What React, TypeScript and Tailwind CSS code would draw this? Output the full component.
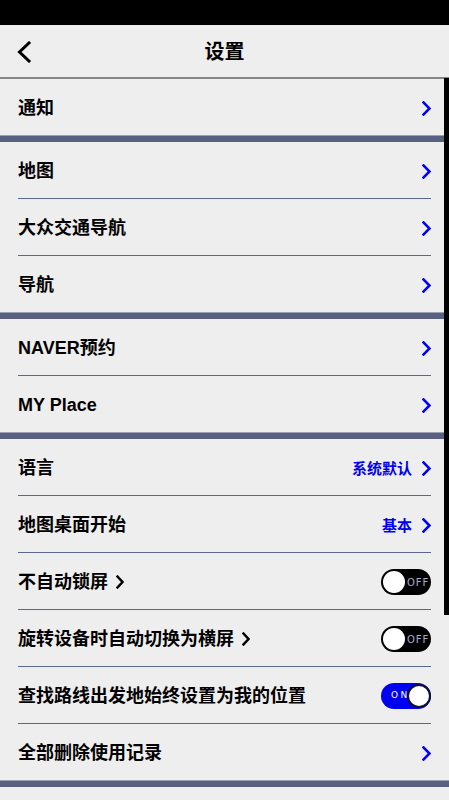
import React from "react";

const font = { fontFamily: '"Liberation Sans", "Noto Sans CJK SC", sans-serif' };

function Chevron({ color = "#0000ff", w = 9, h = 15, sw = 2.6 }: { color?: string; w?: number; h?: number; sw?: number }) {
  return (
    <svg width={w} height={h} viewBox={`0 0 ${w} ${h}`} fill="none">
      <polyline points={`1.5,1.5 ${w - 1.5},${h / 2} 1.5,${h - 1.5}`} stroke={color} strokeWidth={sw} strokeLinecap="square" strokeLinejoin="miter" />
    </svg>
  );
}

function Toggle({ on }: { on: boolean }) {
  if (on) {
    return (
      <div className="relative w-[50px] h-[26px] rounded-full bg-[#0000f0] flex items-center">
        <span className="absolute left-[10px] text-[9px] tracking-[2.5px] text-white" style={{ fontFamily: '"DejaVu Sans", sans-serif' }}>ON</span>
        <div className="absolute right-[0px] top-[1px] w-[24px] h-[24px] rounded-full bg-white border-[2px] border-[#101030]" />
      </div>
    );
  }
  return (
    <div className="relative w-[50px] h-[26px] rounded-full bg-black flex items-center">
      <div className="absolute left-[2px] top-[2px] w-[22px] h-[22px] rounded-full bg-white" />
      <span className="absolute left-[26px] text-[10px] tracking-[1px] text-[#a8aed0]" style={{ fontFamily: '"DejaVu Sans", sans-serif' }}>OFF</span>
    </div>
  );
}

function Row({ label, right, inlineChevron }: { label: string; right?: React.ReactNode; inlineChevron?: boolean }) {
  return (
    <div className="h-[56px] flex items-center justify-between pl-[18px] pr-[18px]">
      <div className="flex items-center gap-[8px] translate-y-[1px]">
        <span className="text-[18px] font-bold text-black leading-none">{label}</span>
        {inlineChevron && <Chevron color="#000" w={8} h={14} sw={2.4} />}
      </div>
      <div className="translate-y-[1px]">{right ?? <Chevron />}</div>
    </div>
  );
}

function Divider() {
  return <div className="mx-[18px] h-px bg-[#5a6890]" />;
}

function Sep() {
  return <div className="h-[7px] bg-[#595f80] border-t border-[#9ba0b4]" />;
}

function RightLabel({ text }: { text: string }) {
  return (
    <div className="flex items-center gap-[10px]">
      <span className="text-[15px] font-bold text-[#0000f0] leading-none">{text}</span>
      <Chevron />
    </div>
  );
}

export default function App() {
  return (
    <div className="relative w-[449px] h-[800px] bg-[#eeeeee] overflow-hidden" style={font}>
      <div className="h-[25px] bg-black" />
      <div className="relative h-[54px] flex items-center justify-center border-b-2 border-[#858585]">
        <div className="absolute left-[16px] top-[16px]">
          <svg width="16" height="22" viewBox="0 0 16 22" fill="none">
            <polyline points="13,2 3.5,11 13,20" stroke="#000" strokeWidth="3" strokeLinecap="square" />
          </svg>
        </div>
        <span className="text-[20px] font-bold text-black translate-y-[1px]">设置</span>
      </div>
      <Row label="通知" />
      <Sep />
      <Row label="地图" />
      <Divider />
      <Row label="大众交通导航" />
      <Divider />
      <Row label="导航" />
      <Sep />
      <Row label="NAVER预约" />
      <Divider />
      <Row label="MY Place" />
      <Sep />
      <Row label="语言" right={<RightLabel text="系统默认" />} />
      <Divider />
      <Row label="地图桌面开始" right={<RightLabel text="基本" />} />
      <Divider />
      <Row label="不自动锁屏" inlineChevron right={<Toggle on={false} />} />
      <Divider />
      <Row label="旋转设备时自动切换为横屏" inlineChevron right={<Toggle on={false} />} />
      <Divider />
      <Row label="查找路线出发地始终设置为我的位置" right={<Toggle on={true} />} />
      <Divider />
      <Row label="全部删除使用记录" />
      <Sep />
      <div className="absolute right-0 top-[78px] w-[5px] h-[537px] bg-black" />
    </div>
  );
}
